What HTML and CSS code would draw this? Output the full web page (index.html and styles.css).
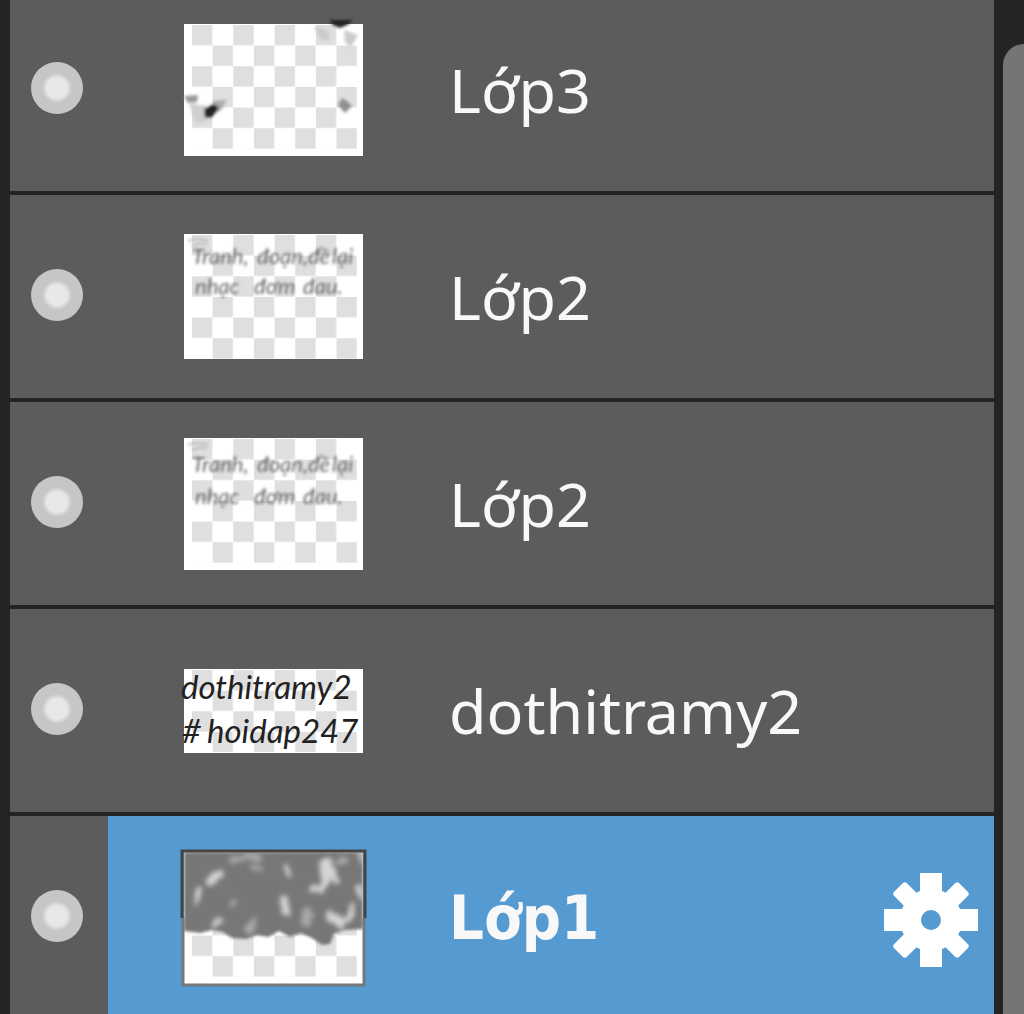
FILE: index.html
```html
<!DOCTYPE html>
<html lang="vi">
<head>
  <meta charset="UTF-8" />
  <meta name="viewport" content="width=device-width, initial-scale=1.0"/>
  <title>Layers</title>
  <link rel="stylesheet" href="styles.css">
</head>
<body>
  <!-- Shared thumbnail patterns and filters -->
  <svg class="defs" width="0" height="0" aria-hidden="true">
    <defs>
      <pattern id="checker" x="8" y="1" width="41.3" height="41.3" patternUnits="userSpaceOnUse">
        <rect width="41.3" height="41.3" fill="#fff"/>
        <rect width="20.3" height="20.3" fill="#dfdfdf"/>
        <rect x="20.65" y="20.65" width="20.3" height="20.3" fill="#dfdfdf"/>
      </pattern>
      <filter id="soft" x="-20%" y="-20%" width="140%" height="140%">
        <feGaussianBlur stdDeviation="1.4"/>
      </filter>
      <filter id="smoke" x="0" y="0" width="179" height="100" filterUnits="userSpaceOnUse">
        <feTurbulence type="fractalNoise" baseFrequency="0.07" numOctaves="2" seed="4" result="noise"/>
        <feDisplacementMap in="SourceGraphic" in2="noise" scale="16" xChannelSelector="R" yChannelSelector="G"/>
        <feGaussianBlur stdDeviation="2.6"/>
      </filter>
    </defs>
  </svg>

  <main class="panel">
    <ul class="layers">
      <li class="layer">
        <div class="layer-eye"><input type="checkbox" id="layer-a" aria-label="Lớp3" checked></div>
        <div class="layer-body">
          <svg class="thumb" width="179" height="132" viewBox="0 0 179 132" aria-hidden="true">
            <rect width="179" height="132" fill="#fff"/>
            <rect x="8" y="1" width="165" height="124" fill="url(#checker)"/>
            <g filter="url(#soft)">
              <path d="M145 -4h24l-6 5-7 3-7-3z" fill="#222"/>
              <path d="M130 2l14 5 2 10-10-2zM160 6l14 5-7 12-6-4z" fill="#cbcbcb"/>
              <path d="M0 72l14-1-1 7-9 1z" fill="#999"/>
              <path d="M5 79l18 3 0 15-11 3z" fill="#cfcfcf"/>
              <path d="M29 77l14-1-6 10-8 5z" fill="#aaa"/>
              <path d="M20 85l10-5 5 4-7 9-7 1z" fill="#222"/>
              <path d="M158 74l5 3 5 5-7 7-7-8z" fill="#909090"/>
            </g>
          </svg>
          <span class="name">Lớp3</span>
        </div>
      </li>

      <li class="layer">
        <div class="layer-eye"><input type="checkbox" id="layer-b" aria-label="Lớp2" checked></div>
        <div class="layer-body">
          <svg class="thumb" width="179" height="125" viewBox="0 0 179 125" aria-hidden="true">
            <rect width="179" height="125" fill="#fff"/>
            <rect x="8" y="1" width="165" height="124" fill="url(#checker)"/>
            <g class="scribble" filter="url(#soft)">
              <path d="M4 7q9-4 20 0M8 12q10-4 15-1" fill="none" stroke="#bbb" stroke-width="2"/>
              <text x="8" y="30">Tranh,</text>
              <text x="73" y="30">đoạn,đề</text>
              <text x="148" y="30">lại</text>
              <text x="11" y="60">nhạc</text>
              <text x="70" y="60">đơm</text>
              <text x="119" y="60">đau.</text>
            </g>
          </svg>
          <span class="name">Lớp2</span>
        </div>
      </li>

      <li class="layer">
        <div class="layer-eye"><input type="checkbox" id="layer-c" aria-label="Lớp2" checked></div>
        <div class="layer-body">
          <svg class="thumb" width="179" height="132" viewBox="0 0 179 132" aria-hidden="true">
            <rect width="179" height="132" fill="#fff"/>
            <rect x="8" y="1" width="165" height="124" fill="url(#checker)"/>
            <g class="scribble" filter="url(#soft)">
              <path d="M4 7q9-4 20 0M8 12q10-4 15-1" fill="none" stroke="#bbb" stroke-width="2"/>
              <text x="8" y="34">Tranh,</text>
              <text x="73" y="34">đoạn,đề</text>
              <text x="148" y="34">lại</text>
              <text x="11" y="66">nhạc</text>
              <text x="70" y="66">đơm</text>
              <text x="119" y="66">đau.</text>
            </g>
          </svg>
          <span class="name">Lớp2</span>
        </div>
      </li>

      <li class="layer">
        <div class="layer-eye"><input type="checkbox" id="layer-d" aria-label="dothitramy2" checked></div>
        <div class="layer-body">
          <svg class="thumb" width="179" height="84" viewBox="0 0 179 84" aria-hidden="true">
            <rect width="179" height="84" fill="#fff"/>
            <rect x="8" y="1" width="165" height="82" fill="url(#checker)"/>
            <g class="lettering">
              <text x="-3" y="30">dothitramy2</text>
              <text x="-2" y="74">#</text>
              <text x="23" y="74">hoidap247</text>
            </g>
          </svg>
          <span class="name">dothitramy2</span>
        </div>
      </li>

      <li class="layer selected">
        <div class="layer-eye"><input type="checkbox" id="layer-e" aria-label="Lớp1" checked></div>
        <div class="layer-body">
          <svg class="thumb" width="179" height="132" viewBox="0 0 179 132" aria-hidden="true">
            <rect width="179" height="132" fill="#fff"/>
            <rect x="8" y="1" width="165" height="124" fill="url(#checker)"/>
            <path filter="url(#soft)" d="M0 0H179V77L160 78 150 82 146 92 138 93 128 86 117 81 106 85 95 79 84 85 73 83 62 87 48 86 39 80 28 78 16 81 0 79z" fill="#777"/>
            <g filter="url(#smoke)" fill="none" stroke="#d4d4d4" stroke-linecap="round" stroke-width="7">
              <path d="M27 27l8-5M13 37l1 12M104 14l0 8M103 46l-1 14M141 12l3 14-5 10-12-2M152 28l-5-10M176 2l3 6M167 54l-9 16-12-5M176 36l0 10M30 75l6-5"/>
              <path d="M52 6l20 0M70 18l4-2M48 53l2-3M122 56l2 14M66 76l2-4M160 10l-8-2" stroke="#a8a8a8"/>
            </g>
            <path d="M-2 66V-1H181V66" fill="none" stroke="#444" stroke-width="3"/>
            <path d="M-1 66V133H180V66" fill="none" stroke="#777" stroke-width="3"/>
          </svg>
          <span class="name">Lớp1</span>
          <button class="settings" type="button" aria-label="Settings">
            <svg width="94" height="94" viewBox="-47 -47 94 94" fill="#fff" aria-hidden="true">
              <path fill-rule="evenodd" d="M0-31A31 31 0 1 1 0 31A31 31 0 1 1 0-31zM0-10A10 10 0 1 0 0 10A10 10 0 1 0 0-10z"/>
              <path d="M-11-47h22v22h-22zM-11 25h22v22h-22zM-47-11h22v22h-22zM25-11h22v22h-22z"/>
              <g transform="rotate(45)">
                <path d="M-9-43q0-3 3-3h12q3 0 3 3v18h-18zM-9 25h18v18q0 3-3 3h-12q-3 0-3-3zM-25-9v18h-18q-3 0-3-3v-12q0-3 3-3zM25-9h18q3 0 3 3v12q0 3-3 3h-18z"/>
              </g>
            </svg>
          </button>
        </div>
      </li>
    </ul>

    <div class="scrollbar">
      <div class="scrollbar-thumb"></div>
    </div>
  </main>
</body>
</html>
```
FILE: styles.css
```css
:root {
  --dark: #242424;
  --row: #5c5c5c;
  --selected: #559bd1;
  --text-color: #f8f8f8;
}

* {
  box-sizing: border-box;
}

body {
  margin: 0;
  background: var(--dark);
  font-family: "Noto Sans", "Open Sans", sans-serif;
  color: var(--text-color);
}

.defs {
  position: absolute;
}

.panel {
  display: flex;
  height: 100vh;
  overflow: hidden;
  padding-left: 10px;
}

/* Layer list, scrolled slightly past the first row */
.layers {
  flex: 1;
  min-width: 0;
  list-style: none;
  margin: -12px 0 0;
  padding: 0;
}

.layer {
  display: flex;
  height: 207px;
  border-bottom: 4px solid var(--dark);
  background: var(--row);
}

.layer-eye {
  display: flex;
  align-items: center;
  justify-content: center;
  flex: none;
  width: 98px;
  padding: 0 4px 4px 0;
}

.layer-eye input {
  appearance: none;
  width: 52px;
  height: 52px;
  margin: 0;
  border-radius: 50%;
  background: radial-gradient(circle, #e8e8e8 10px, #c6c6c6 15px);
  cursor: pointer;
}

.layer-body {
  display: flex;
  align-items: center;
  flex: 1;
  min-width: 0;
  padding: 0 16px 0 76px;
}

.selected .layer-body {
  background: var(--selected);
}

.thumb {
  flex: none;
  overflow: visible;
}

.scribble {
  fill: #666;
  font: italic 22px "Lato", sans-serif;
}

.lettering {
  fill: #222;
  font: italic 33px "Lato", sans-serif;
}

.name {
  flex: 1;
  margin-left: 86px;
  font-size: 61px;
  line-height: 80px;
}

.selected .name {
  font-family: "DejaVu Sans Condensed", "DejaVu Sans", sans-serif;
  font-weight: 700;
}

.settings {
  display: flex;
  flex: none;
  padding: 4px 0 0;
  border: none;
  background: none;
  cursor: pointer;
}

/* Scrollbar */
.scrollbar {
  flex: none;
  width: 30px;
  padding: 44px 0 0 9px;
  background: var(--dark);
}

.scrollbar-thumb {
  height: 100%;
  border-radius: 24px 0 0 0;
  background: #757573;
}
```
